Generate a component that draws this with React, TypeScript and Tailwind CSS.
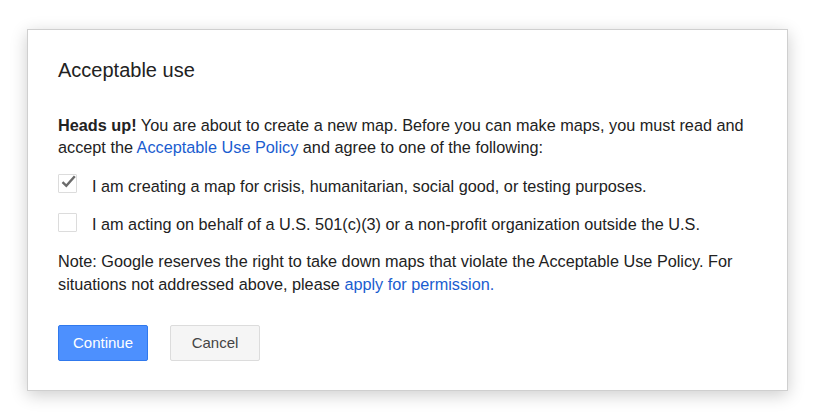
import React from "react";

function CheckBox({ checked }: { checked?: boolean }) {
  return (
    <div className="relative w-[19px] h-[19px] shrink-0 border border-[#dcdcdc] bg-white rounded-[1px]">
      {checked && (
        <svg
          className="absolute left-[1px] top-[-1px]"
          width="17"
          height="15"
          viewBox="0 0 17 15"
        >
          <path d="M2.5 8.2 L6.3 11.8 L14.8 2.2" fill="none" stroke="#6b6b6b" strokeWidth="2.4" />
        </svg>
      )}
    </div>
  );
}

export default function App() {
  return (
    <div
      className="w-[820px] h-[415px] bg-white overflow-hidden"
      style={{ fontFamily: '"Liberation Sans", Arial, sans-serif' }}
    >
      <div className="ml-[27px] mt-[29px] w-[761px] h-[362px] border border-[#cfcfcf] bg-white shadow-[0_4px_16px_rgba(0,0,0,0.2)] px-[30px] pt-[28px] pb-[29px] flex flex-col text-[#222]">
        <div className="text-[20px] leading-[24px] text-[#222]">Acceptable use</div>
        <p className="mt-[31.5px] text-[16.25px] leading-[22.4px]">
          <b>Heads up!</b> You are about to create a new map. Before you can make maps, you must
          read and accept the{" "}
          <a className="text-[#1a5dd0] no-underline" href="#">
            Acceptable Use Policy
          </a>{" "}
          and agree to one of the following:
        </p>
        <div className="mt-[17px] flex flex-col gap-[16px] text-[16.25px] leading-[22px]">
          <label className="flex items-start gap-[15px]">
            <div className="mt-[-1px]">
              <CheckBox checked />
            </div>
            <span>I am creating a map for crisis, humanitarian, social good, or testing purposes.</span>
          </label>
          <label className="flex items-start gap-[15px]">
            <div className="mt-[0px]">
              <CheckBox />
            </div>
            <span>I am acting on behalf of a U.S. 501(c)(3) or a non-profit organization outside the U.S.</span>
          </label>
        </div>
        <p className="mt-[15px] text-[16.25px] leading-[23px]">
          Note: Google reserves the right to take down maps that violate the Acceptable Use Policy.
          For situations not addressed above, please{" "}
          <a className="text-[#1a5dd0]" href="#">
            apply for permission
          </a>
          <span className="text-[#1a5dd0]">.</span>
        </p>
        <div className="mt-[29px] flex gap-[22px]">
          <button className="w-[90px] h-[36px] rounded-[2px] border border-[#3079ed] bg-[#4d90fe] text-white text-[15px]">
            Continue
          </button>
          <button className="w-[90px] h-[36px] rounded-[2px] border border-[#dcdcdc] bg-[#f5f5f5] text-[#444] text-[15px]">
            Cancel
          </button>
        </div>
      </div>
    </div>
  );
}
